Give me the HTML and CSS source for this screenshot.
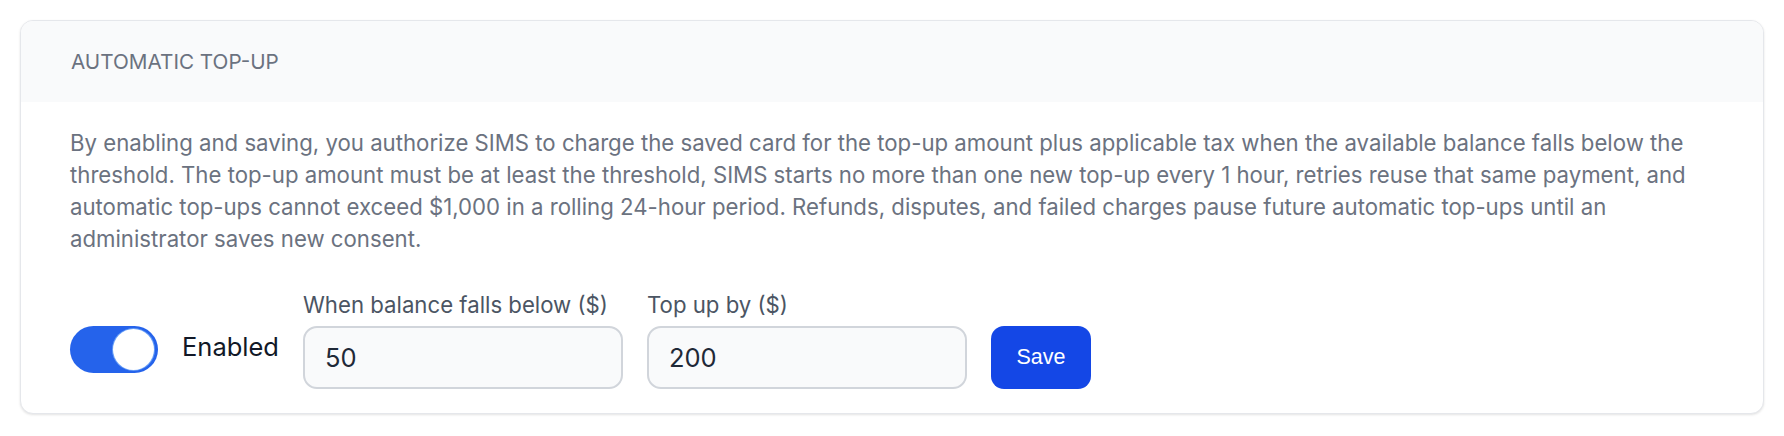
FILE: index.html
```html
<!DOCTYPE html>
<html lang="en">
<head>
<meta charset="utf-8">
<title>Automatic top-up</title>
<link rel="stylesheet" href="styles.css">
</head>
<body>
<section class="card">
  <header class="card-header">
    <h2 class="card-title">AUTOMATIC TOP-UP</h2>
  </header>
  <div class="card-body">
    <p class="consent">By enabling and saving, you authorize SIMS to charge the saved card for the top-up amount plus applicable tax when the available balance falls below the threshold. The top-up amount must be at least the threshold, SIMS starts no more than one new top-up every 1 hour, retries reuse that same payment, and automatic top-ups cannot exceed $1,000 in a rolling 24-hour period. Refunds, disputes, and failed charges pause future automatic top-ups until an administrator saves new consent.</p>
    <div class="controls">
      <label class="switch-group">
        <span class="switch" role="switch" aria-checked="true"><span class="knob"></span></span>
        <span class="switch-label">Enabled</span>
      </label>
      <div class="field">
        <label class="field-label" for="threshold">When balance falls below ($)</label>
        <input class="field-input" id="threshold" type="text" value="50">
      </div>
      <div class="field">
        <label class="field-label" for="amount">Top up by ($)</label>
        <input class="field-input" id="amount" type="text" value="200">
      </div>
      <button class="save-btn" type="button">Save</button>
    </div>
  </div>
</section>
</body>
</html>
```

FILE: styles.css
```css
* { box-sizing: border-box; }

html, body { background: #ffffff; }

body {
  margin: 0;
  padding: 20px;
  font-family: Inter, "Noto Sans", sans-serif;
}

.card {
  border: 1px solid #e5e7eb;
  border-radius: 13px;
  background: #ffffff;
  box-shadow: 0 1px 3px rgba(0, 0, 0, 0.08), 0 1px 2px rgba(0, 0, 0, 0.04);
  overflow: hidden;
}

.card-header {
  background: #f9fafb;
  padding: 27px 50px 26px;
}

.card-title {
  margin: 0;
  font-size: 20.7px;
  line-height: 28px;
  font-weight: 400;
  color: #6b7280;
}

.card-body {
  padding: 25px 49px 24px;
}

.consent {
  margin: 0;
  font-size: 22.2px;
  line-height: 32px;
  color: #6b7280;
}

.controls {
  margin-top: 36px;
  display: flex;
  align-items: flex-end;
  gap: 24px;
}

.switch-group {
  display: flex;
  align-items: center;
  gap: 24px;
  margin-bottom: 16px;
}

.switch {
  position: relative;
  display: block;
  width: 88px;
  height: 47px;
  border-radius: 999px;
  background: #2563eb;
}

.knob {
  position: absolute;
  top: 3px;
  right: 4px;
  width: 41px;
  height: 41px;
  border-radius: 50%;
  background: #ffffff;
  box-shadow: 0 0 0 1px rgba(147, 197, 253, 0.6);
}

.switch-label {
  font-size: 25.5px;
  line-height: 32px;
  color: #111827;
  margin-bottom: 6px;
}

.field {
  display: flex;
  flex-direction: column;
}

.field-label {
  font-size: 22.2px;
  line-height: 28px;
  color: #4b5563;
  margin-bottom: 7px;
}

.field-input {
  width: 320px;
  height: 63px;
  padding: 0 20px;
  border: 2px solid #d1d5db;
  border-radius: 14px;
  background: #f9fafb;
  font-family: Inter, "Noto Sans", sans-serif;
  font-size: 25.5px;
  color: #1f2937;
  outline: none;
}

.save-btn {
  width: 100px;
  height: 63px;
  border: 0;
  border-radius: 13px;
  background: #1447e6;
  color: #ffffff;
  font-family: "Liberation Sans", Arial, sans-serif;
  font-size: 21.5px;
  padding: 0;
}
```
